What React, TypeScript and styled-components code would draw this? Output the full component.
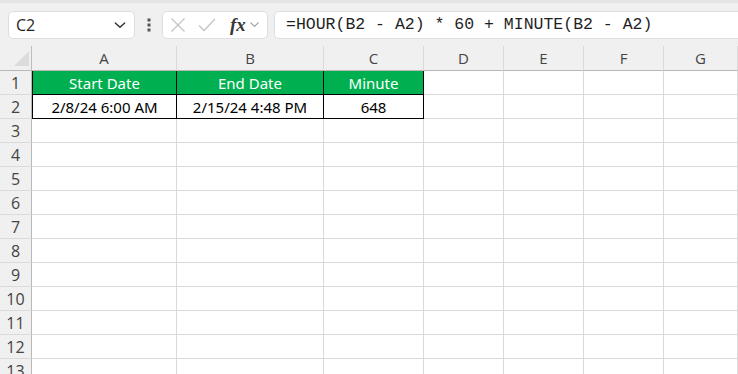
import React from "react";
import styled, { createGlobalStyle } from "styled-components";

const Global = createGlobalStyle`
  html, body { margin: 0; padding: 0; background: #ffffff; }
  body { width: 738px; height: 374px; overflow: hidden; font-family: "Open Sans", "Noto Sans", sans-serif; }
`;

const Page = styled.div`
  display: flex;
  flex-direction: column;
  width: 738px;
  height: 374px;
  overflow: hidden;
`;

const Toolbar = styled.div`
  flex: none;
  height: 46px;
  box-sizing: border-box;
  background: #f0f0f0;
  border-top: 3px solid #e4e4e4;
  display: flex;
  align-items: center;
  padding: 0 0 0 8px;
`;

const Box = styled.div<{ $w?: number }>`
  height: 28px;
  box-sizing: border-box;
  background: #ffffff;
  border: 1px solid #dedede;
  border-radius: 5px;
  display: flex;
  align-items: center;
  ${(p) => (p.$w ? `width: ${p.$w}px; flex: none;` : "flex: 1; border-right: none; border-radius: 5px 0 0 5px;")}
`;

const NameText = styled.span`
  flex: 1;
  padding-left: 7px;
  font-family: "Open Sans", "Noto Sans", sans-serif;
  font-size: 16px;
  color: #1f1f1f;
`;

const Dots = styled.div`
  width: 27px;
  display: flex;
  justify-content: center;
  flex: none;
`;

const FormulaText = styled.span`
  padding-left: 11px;
  font-family: "Liberation Mono", "DejaVu Sans Mono", monospace;
  font-size: 16.5px;
  color: #1f1f1f;
  white-space: pre;
`;

const Fx = styled.span`
  font-family: "Liberation Serif", serif;
  font-style: italic;
  font-weight: bold;
  font-size: 19px;
  color: #383838;
  margin-left: 14px;
  line-height: 1;
`;

const Gap = styled.div<{ $w: number }>`
  width: ${(p) => p.$w}px;
  flex: none;
`;

const Grid = styled.div`
  flex: none;
  display: grid;
  grid-template-columns: 32px 145px 147px 100px 80px 80px 80px 1fr;
  grid-auto-rows: 24px;
  grid-template-rows: 25px;
`;

const ColHead = styled.div<{ $corner?: boolean }>`
  background: #f0f0f0;
  border-right: 1px solid ${(p) => (p.$corner ? "#bdbdbd" : "#dadada")};
  border-bottom: 1px solid #b8b8b8;
  display: flex;
  align-items: center;
  justify-content: center;
  font-family: "Open Sans", "Noto Sans", sans-serif;
  font-size: 15px;
  color: #444;
  position: relative;
  box-sizing: border-box;
`;

const Corner = styled.div`
  position: absolute;
  right: 2px;
  bottom: 4px;
  width: 0;
  height: 0;
  border-left: 15px solid transparent;
  border-bottom: 15px solid #dcdcdc;
`;

const RowHead = styled.div`
  background: #f0f0f0;
  border-right: 1px solid #b8b8b8;
  border-bottom: 1px solid #dadada;
  display: flex;
  align-items: center;
  justify-content: center;
  font-family: "Open Sans", "Noto Sans", sans-serif;
  font-size: 16px;
  color: #444;
  box-sizing: border-box;
`;

const Cell = styled.div<{ $header?: boolean; $boxed?: boolean; $first?: boolean }>`
  box-sizing: border-box;
  border-right: 1px solid ${(p) => (p.$boxed ? "#000" : "#dadada")};
  border-bottom: 1px solid ${(p) => (p.$boxed ? "#000" : "#dadada")};
  ${(p) => (p.$first ? "border-left: 1px solid #000;" : "")}
  background: ${(p) => (p.$header ? "#00b050" : "#ffffff")};
  color: ${(p) => (p.$header ? "#ffffff" : "#000000")};
  display: flex;
  align-items: center;
  justify-content: center;
  font-family: "Noto Sans", "Open Sans", sans-serif;
  font-size: 15px;
  white-space: nowrap;
  overflow: hidden;
`;

const cols = ["A", "B", "C", "D", "E", "F", "G"];

const data: Record<number, string[]> = {
  1: ["Start Date", "End Date", "Minute"],
  2: ["2/8/24 6:00 AM", "2/15/24 4:48 PM", "648"],
};

const Chevron = ({ size = 12, color = "#444" }: { size?: number; color?: string }) => (
  <svg width={size} height={size} viewBox="0 0 12 12">
    <path d="M2 4.2 L6 8 L10 4.2" fill="none" stroke={color} strokeWidth="1.2" strokeLinecap="round" strokeLinejoin="round" />
  </svg>
);

export default function App() {
  const rows = Array.from({ length: 13 }, (_, i) => i + 1);
  return (
    <Page>
      <Global />
      <Toolbar>
        <Box $w={127}>
          <NameText>C2</NameText>
          <Chevron size={14} color="#333" />
          <Gap $w={7} />
        </Box>
        <Dots>
          <svg width="4" height="14" viewBox="0 0 4 14">
            <rect x="0.5" y="0.5" width="3" height="3" fill="#555" />
            <rect x="0.5" y="5.5" width="3" height="3" fill="#555" />
            <rect x="0.5" y="10.5" width="3" height="3" fill="#555" />
          </svg>
        </Dots>
        <Box $w={106}>
          <Gap $w={7} />
          <svg width="16" height="16" viewBox="0 0 16 16">
            <path d="M1.5 1.5 L14.5 14.5 M14.5 1.5 L1.5 14.5" stroke="#c4c4c4" strokeWidth="1.3" fill="none" />
          </svg>
          <Gap $w={12} />
          <svg width="18" height="16" viewBox="0 0 18 16">
            <path d="M1 8.5 L6 13.5 L17 2" stroke="#c4c4c4" strokeWidth="1.3" fill="none" />
          </svg>
          <Fx>fx</Fx>
          <Gap $w={3} />
          <Chevron size={11} color="#9a9a9a" />
        </Box>
        <Gap $w={6} />
        <Box>
          <FormulaText>=HOUR(B2 - A2) * 60 + MINUTE(B2 - A2)</FormulaText>
        </Box>
      </Toolbar>
      <Grid>
        <ColHead $corner>
          <Corner />
        </ColHead>
        {cols.map((c, i) => (
          <ColHead key={i}>{c}</ColHead>
        ))}
        {rows.map((r) => (
          <React.Fragment key={r}>
            <RowHead>{r}</RowHead>
            {cols.map((_, ci) => {
              const txt = data[r]?.[ci];
              const boxed = (r === 1 || r === 2) && ci < 3;
              return (
                <Cell key={ci} $header={r === 1 && ci < 3} $boxed={boxed} $first={boxed && ci === 0}>
                  {txt}
                </Cell>
              );
            })}
          </React.Fragment>
        ))}
      </Grid>
    </Page>
  );
}
